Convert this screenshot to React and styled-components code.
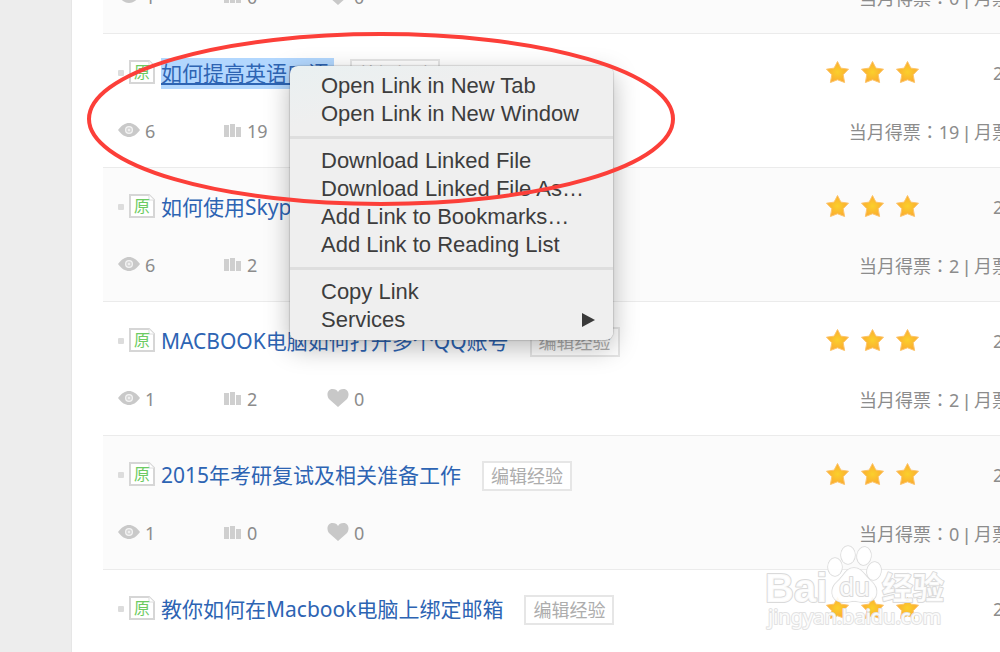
import React from "react";
import styled, { createGlobalStyle } from "styled-components";

const GlobalStyle = createGlobalStyle`
  * { box-sizing: border-box; }
  body {
    margin: 0;
    background: #ededed;
    font-family: "Noto Sans", "Noto Sans CJK SC", sans-serif;
    color: #8c8c8c;
    font-size: 18px;
  }
`;

const Page = styled.div`
  position: relative;
  display: flex;
  height: 100vh;
  min-height: 420px;
  overflow: hidden;
`;

const Gutter = styled.aside`
  flex: 0 0 72px;
  background: #ededed;
  border-right: 1px solid #e6e6e6;
`;

const Content = styled.main`
  flex: 1;
  min-width: 0;
  background: #fff;
  padding-left: 31px;
`;

const List = styled.ul`
  list-style: none;
  margin: -100px -10px 0 0;
  padding: 0;
`;

const Row = styled.li`
  display: flex;
  flex-direction: column;
  gap: 26px;
  padding: 23px 0 20px 15px;
  background: ${(p) => (p.$shaded ? "#fbfbfb" : "#fff")};
  border-bottom: 1px solid #ebebeb;
`;

const Line = styled.div`
  display: flex;
  align-items: center;
  height: 32px;
  white-space: nowrap;
`;

const Bullet = styled.span`
  width: 6px;
  height: 6px;
  margin-right: 5px;
  border-radius: 1px;
  background: #dcdcdc;
`;

const Badge = styled.svg`
  width: 26px;
  height: 24px;
  margin: 0 6px 2px 0;
  flex: none;
`;

const TitleLink = styled.a`
  font-size: 21px;
  line-height: 31px;
  color: #2d64b3;
  text-decoration: ${(p) => (p.$selected ? "underline" : "none")};
  text-decoration-thickness: 2px;
  text-underline-offset: 2px;
  background: ${(p) => (p.$selected ? "#b2d7fe" : "transparent")};
  padding-right: 5px;
`;

const EditButton = styled.button`
  height: 30px;
  width: 90px;
  margin: 2px 0 0 16px;
  padding: 0;
  border: 2px solid #e6e6e6;
  background: #fff;
  color: #adadad;
  font-family: inherit;
  font-size: 18px;
  line-height: 26px;
`;

const Stars = styled.div`
  display: flex;
  gap: 10px;
  margin: 0 73px 2px auto;
`;

const DateCell = styled.span`
  width: 17px;
`;

const Stat = styled.span`
  display: flex;
  align-items: center;
  gap: 5px;
  width: ${(p) => p.$width}px;
  svg { margin-bottom: 2px; }
`;

const Votes = styled.span`
  margin-left: auto;
`;

const Colon = styled.span`
  font-family: "Noto Sans CJK TC", sans-serif;
`;

const Divider = styled.span`
  font-family: "Liberation Sans", sans-serif;
  white-space: pre;
`;

const Menu = styled.div`
  position: absolute;
  left: 290px;
  top: 66px;
  width: 323px;
  padding: 6px 0;
  border-radius: 8px;
  background: linear-gradient(165deg, #e9f0f1 0, #efefef 60px);
  box-shadow: 0 0 1px 1px rgba(0, 0, 0, 0.12), 0 8px 26px rgba(0, 0, 0, 0.28);
`;

const MenuItem = styled.button`
  display: flex;
  align-items: center;
  justify-content: space-between;
  width: 100%;
  height: 28px;
  padding: 0 18px 0 31px;
  border: 0;
  background: none;
  color: #3d3d3d;
  font-family: "Liberation Sans", sans-serif;
  font-size: 22px;
  line-height: 28px;
  text-align: left;
`;

const Separator = styled.hr`
  height: 3px;
  margin: 8px 0;
  border: 0;
  background: #dedede;
`;

const Annotation = styled.svg`
  position: absolute;
  left: 86px;
  top: 31px;
  width: 592px;
  height: 176px;
  pointer-events: none;
`;

const Watermark = styled.svg`
  position: absolute;
  right: 50px;
  bottom: 16px;
  width: 186px;
  height: 94px;
  pointer-events: none;
`;

const OriginalBadge = () => (
  <Badge viewBox="0 0 26 24">
    <path d="M1 1H20L25 6V23H1Z" fill="#fff" stroke="#d6d6d6" strokeWidth="2" />
    <path d="M20 1V6H25" fill="#fff" stroke="#dedede" strokeWidth="1" />
    <text x="5" y="18" fontSize="16" fill="#6ccb62" fontFamily="Noto Sans CJK SC, sans-serif">原</text>
  </Badge>
);

const Eye = () => (
  <svg width="22" height="14" viewBox="0 0 22 14">
    <path d="M0 7C4 2 7 0 11 0S18 2 22 7C18 12 15 14 11 14S4 12 0 7Z" fill="#c9c9c9" />
    <circle cx="11" cy="7" r="4" fill="#f4f4f4" />
    <circle cx="11" cy="7" r="2.8" fill="#d6d6d6" />
    <circle cx="11" cy="7" r="1.2" fill="#f0f0f0" />
  </svg>
);

const Bars = () => (
  <svg width="18" height="13" viewBox="0 0 18 13">
    <path d="M0 1H5V13H0ZM6 0H11V13H6ZM12 3H17V13H12Z" fill="#cfcfcf" />
  </svg>
);

const Heart = () => (
  <svg width="22" height="18" viewBox="0 0 22 18">
    <path d="M11 18L2.5 10.5C-1 7 0 0 5.5 0C8.5 0 10 1.2 11 3C12 1.2 13.5 0 16.500 0C22 0 23 7 19.500 10.500Z" fill="#c8c8c8" />
  </svg>
);

const Star = () => (
  <svg width="25" height="24" viewBox="0 0 25 24">
    <defs>
      <radialGradient id="star">
        <stop offset="0" stopColor="#fbd02c" />
        <stop offset="1" stopColor="#fbac30" />
      </radialGradient>
    </defs>
    <path d="M12.500 1.500L15.900 8.100L23.500 9.200L18.200 14.700L19.600 22.500L12.500 19.800L5.400 22.500L6.800 14.700L1.500 9.200L9.100 8.100Z" fill="url(#star)" stroke="#fdc56b" strokeWidth="1" strokeLinejoin="round" />
  </svg>
);

const articles = [
  { title: "", views: 1, ballots: 0, likes: 0, votes: 0 },
  { title: "如何提高英语口语", views: 6, ballots: 19, votes: 19, selected: true, edit: true },
  { title: "如何使用Skype", views: 6, ballots: 2, votes: 2 },
  { title: "MACBOOK电脑如何打开多个QQ账号", views: 1, ballots: 2, likes: 0, votes: 2, edit: true },
  { title: "2015年考研复试及相关准备工作", views: 1, ballots: 0, likes: 0, votes: 0, edit: true },
  { title: "教你如何在Macbook电脑上绑定邮箱", edit: true },
];

const Article = ({ article, shaded }) => (
  <Row $shaded={shaded}>
    <Line>
      {article.title && (
        <>
          <Bullet />
          <OriginalBadge />
          <TitleLink href="#" $selected={article.selected}>{article.title}</TitleLink>
          {article.edit && <EditButton type="button">编辑经验</EditButton>}
          <Stars><Star /><Star /><Star /></Stars>
          <DateCell>2</DateCell>
        </>
      )}
    </Line>
    <Line>
      {article.views !== undefined && (
        <>
          <Stat $width={106}><Eye />{article.views}</Stat>
          <Stat $width={103}><Bars />{article.ballots}</Stat>
          {article.likes !== undefined && <Stat $width={60}><Heart />{article.likes}</Stat>}
          <Votes>当月得票<Colon>：</Colon>{article.votes}<Divider> | </Divider>月票</Votes>
        </>
      )}
    </Line>
  </Row>
);

const menuGroups = [
  ["Open Link in New Tab", "Open Link in New Window"],
  ["Download Linked File", "Download Linked File As…", "Add Link to Bookmarks…", "Add Link to Reading List"],
  ["Copy Link", "Services"],
];

const ContextMenu = () => (
  <Menu role="menu">
    {menuGroups.map((group, i) => (
      <React.Fragment key={i}>
        {i > 0 && <Separator />}
        {group.map((label) => (
          <MenuItem key={label} type="button" role="menuitem">
            {label}
            {label === "Services" && (
              <svg width="13" height="16" viewBox="0 0 13 16"><path d="M0 1L13 8L0 15Z" fill="#3a3a3a" /></svg>
            )}
          </MenuItem>
        ))}
      </React.Fragment>
    ))}
  </Menu>
);

const Logo = () => (
  <Watermark viewBox="0 0 186 94">
    <g fill="#fff" fillOpacity="0.9" stroke="#dadada" strokeWidth="2" paintOrder="stroke" strokeLinejoin="round">
      <g strokeWidth="1.5">
        <ellipse cx="71" cy="25" rx="7" ry="9" />
        <ellipse cx="84" cy="13" rx="7" ry="9" />
        <ellipse cx="100" cy="14" rx="7" ry="9" transform="rotate(8 100 14)" />
        <ellipse cx="110" cy="29" rx="7" ry="9" transform="rotate(12 110 29)" />
        <path d="M90 26C82 26 80 34 73 40C66 46 66 58 77 60C84 61 86 59 90 59S97 61 103 60C115 58 115 46 107 39C100 33 98 26 90 26Z" />
      </g>
      <text x="1" y="60" fontSize="40" fontWeight="700" fontFamily="Liberation Sans, sans-serif">Bai</text>
      <text x="75" y="54" fontSize="25" fontFamily="Noto Sans, sans-serif">du</text>
      <text x="118" y="57" fontSize="31" fontWeight="700" fontFamily="Noto Sans CJK SC, sans-serif">经验</text>
      <text x="4" y="82" fontSize="20" stroke="#e2e2e2" fontFamily="Noto Sans, sans-serif">jingyan.baidu.com</text>
    </g>
  </Watermark>
);

export default function App() {
  return (
    <Page>
      <GlobalStyle />
      <Gutter />
      <Content>
        <List>
          {articles.map((article, i) => (
            <Article key={i} article={article} shaded={i % 2 === 0} />
          ))}
        </List>
      </Content>
      <ContextMenu />
      <Annotation viewBox="0 0 592 176">
        <ellipse cx="295" cy="88" rx="292" ry="85" fill="none" stroke="#fc3f39" strokeWidth="4" />
      </Annotation>
      <Logo />
    </Page>
  );
}
